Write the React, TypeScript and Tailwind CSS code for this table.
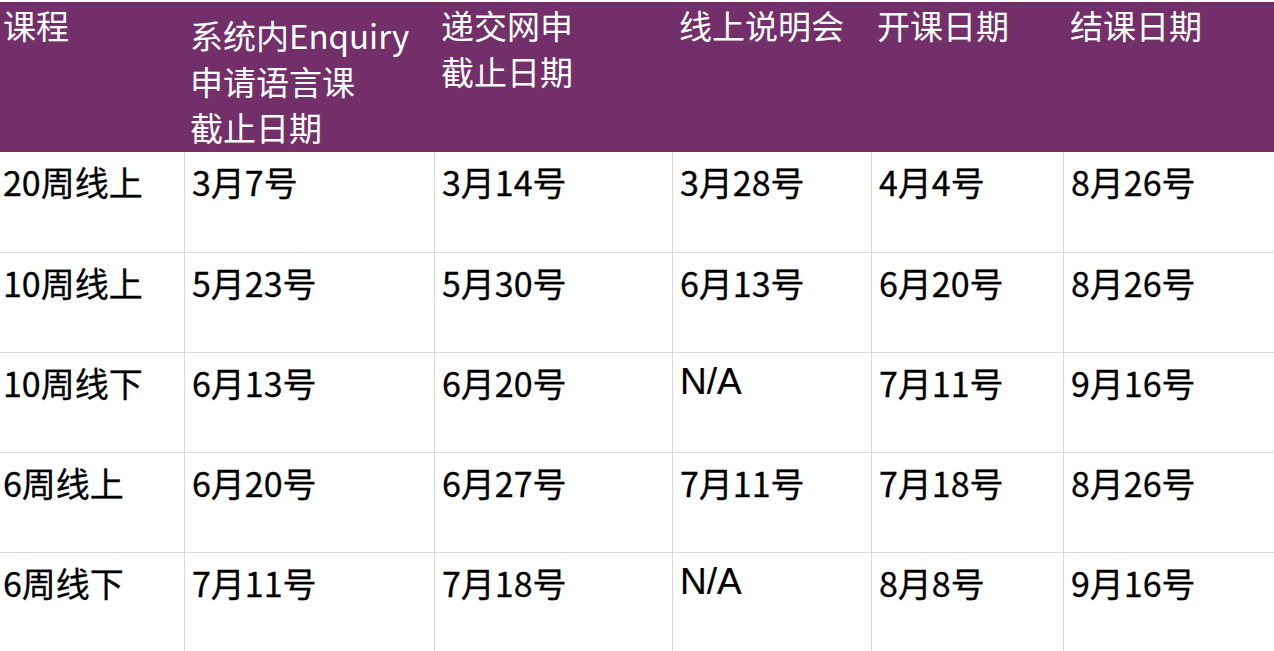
import React from "react";

const cols = "grid grid-cols-[184px_250px_238px_199px_192px_1fr]";

const rows: string[][] = [
  ["20周线上", "3月7号", "3月14号", "3月28号", "4月4号", "8月26号"],
  ["10周线上", "5月23号", "5月30号", "6月13号", "6月20号", "8月26号"],
  ["10周线下", "6月13号", "6月20号", "N/A", "7月11号", "9月16号"],
  ["6周线上", "6月20号", "6月27号", "7月11号", "7月18号", "8月26号"],
  ["6周线下", "7月11号", "7月18号", "N/A", "8月8号", "9月16号"],
];

export default function App() {
  return (
    <div
      className="w-[1274px] h-[651px] overflow-hidden bg-white"
      style={{ fontFamily: '"Noto Sans CJK SC", "Noto Sans", sans-serif' }}
    >
      <div className="h-[2px] bg-white" />
      <div className={`${cols} h-[150px] bg-[#732f6a] text-white text-[33px] leading-[46px]`}>
        <div className="pl-[3px]">课程</div>
        <div className="pl-[6px] pt-[10px]">
          系统内Enquiry
          <br />
          申请语言课
          <br />
          截止日期
        </div>
        <div className="pl-[7px]">
          递交网申
          <br />
          截止日期
        </div>
        <div className="pl-[7px]">线上说明会</div>
        <div className="pl-[6px]">开课日期</div>
        <div className="pl-[7px]">结课日期</div>
      </div>
      {rows.map((r, i) => (
        <div key={i} className={`${cols} h-[100px] ${i > 0 ? "border-t border-[#d9d9d9]" : ""}`}>
          {r.map((c, j) => (
            <div
              key={j}
              className={`${j > 0 ? "border-l border-[#d9d9d9] pl-[7px]" : "pl-[3px]"} ${
                c === "N/A" ? "pt-[10px]" : "pt-[13px]"
              }`}
            >
              {c === "N/A" ? (
                <span
                  className="text-[37px] leading-none text-black [-webkit-text-stroke:0.2px_black]"
                  style={{ fontFamily: '"Liberation Sans", Arial, sans-serif' }}
                >
                  N/A
                </span>
              ) : (
                <span className="text-[34px] leading-none font-normal text-black [-webkit-text-stroke:0.3px_black]">
                  {c}
                </span>
              )}
            </div>
          ))}
        </div>
      ))}
    </div>
  );
}
